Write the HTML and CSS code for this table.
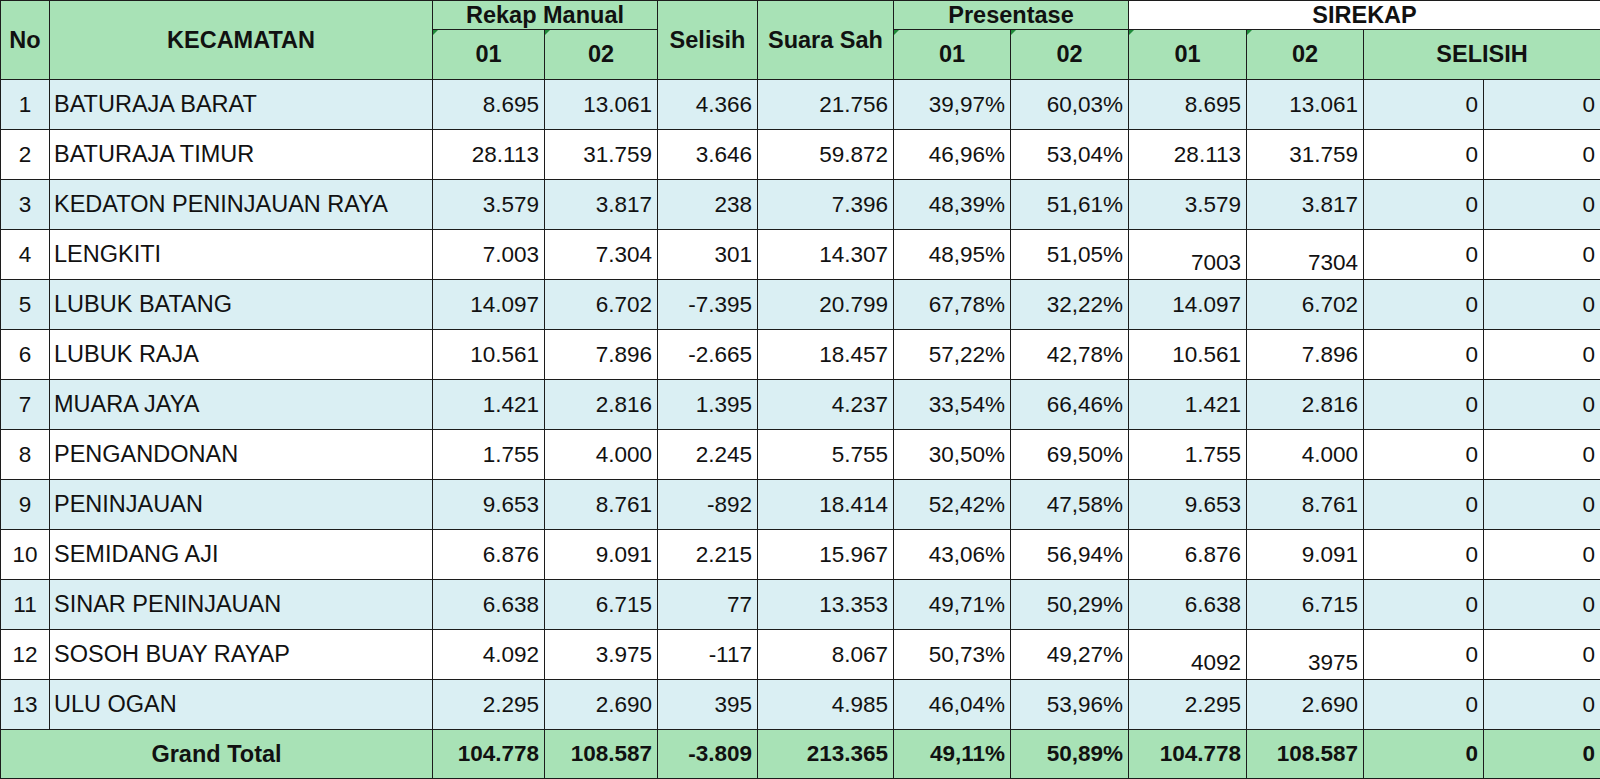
FILE: index.html
```html
<!DOCTYPE html>
<html lang="id">
<head>
<meta charset="utf-8">
<title>Rekap Kecamatan</title>
<link rel="stylesheet" href="styles.css">
</head>
<body>
<table class="sheet">
  <colgroup>
    <col style="width:49px">
    <col style="width:383px">
    <col style="width:112px">
    <col style="width:113px">
    <col style="width:100px">
    <col style="width:136px">
    <col style="width:117px">
    <col style="width:118px">
    <col style="width:118px">
    <col style="width:117px">
    <col style="width:120px">
    <col style="width:117px">
  </colgroup>
  <thead>
    <tr class="h1">
      <th rowspan="2" class="g">No</th>
      <th rowspan="2" class="g">KECAMATAN</th>
      <th colspan="2" class="g">Rekap Manual</th>
      <th rowspan="2" class="g">Selisih</th>
      <th rowspan="2" class="g">Suara Sah</th>
      <th colspan="2" class="g">Presentase</th>
      <th colspan="4" class="w">SIREKAP</th>
    </tr>
    <tr class="h2">
      <th class="g tri">01</th>
      <th class="g tri">02</th>
      <th class="g tri">01</th>
      <th class="g tri">02</th>
      <th class="g tri">01</th>
      <th class="g tri">02</th>
      <th colspan="2" class="g">SELISIH</th>
    </tr>
  </thead>
  <tbody>
    <tr class="b"><td class="no">1</td><td class="name">BATURAJA BARAT</td><td>8.695</td><td>13.061</td><td>4.366</td><td>21.756</td><td>39,97%</td><td>60,03%</td><td>8.695</td><td>13.061</td><td>0</td><td>0</td></tr>
    <tr><td class="no">2</td><td class="name">BATURAJA TIMUR</td><td>28.113</td><td>31.759</td><td>3.646</td><td>59.872</td><td>46,96%</td><td>53,04%</td><td>28.113</td><td>31.759</td><td>0</td><td>0</td></tr>
    <tr class="b"><td class="no">3</td><td class="name">KEDATON PENINJAUAN RAYA</td><td>3.579</td><td>3.817</td><td>238</td><td>7.396</td><td>48,39%</td><td>51,61%</td><td>3.579</td><td>3.817</td><td>0</td><td>0</td></tr>
    <tr><td class="no">4</td><td class="name">LENGKITI</td><td>7.003</td><td>7.304</td><td>301</td><td>14.307</td><td>48,95%</td><td>51,05%</td><td class="raw">7003</td><td class="raw raw2">7304</td><td>0</td><td>0</td></tr>
    <tr class="b"><td class="no">5</td><td class="name">LUBUK BATANG</td><td>14.097</td><td>6.702</td><td>-7.395</td><td>20.799</td><td>67,78%</td><td>32,22%</td><td>14.097</td><td>6.702</td><td>0</td><td>0</td></tr>
    <tr><td class="no">6</td><td class="name">LUBUK RAJA</td><td>10.561</td><td>7.896</td><td>-2.665</td><td>18.457</td><td>57,22%</td><td>42,78%</td><td>10.561</td><td>7.896</td><td>0</td><td>0</td></tr>
    <tr class="b"><td class="no">7</td><td class="name">MUARA JAYA</td><td>1.421</td><td>2.816</td><td>1.395</td><td>4.237</td><td>33,54%</td><td>66,46%</td><td>1.421</td><td>2.816</td><td>0</td><td>0</td></tr>
    <tr><td class="no">8</td><td class="name">PENGANDONAN</td><td>1.755</td><td>4.000</td><td>2.245</td><td>5.755</td><td>30,50%</td><td>69,50%</td><td>1.755</td><td>4.000</td><td>0</td><td>0</td></tr>
    <tr class="b"><td class="no">9</td><td class="name">PENINJAUAN</td><td>9.653</td><td>8.761</td><td>-892</td><td>18.414</td><td>52,42%</td><td>47,58%</td><td>9.653</td><td>8.761</td><td>0</td><td>0</td></tr>
    <tr><td class="no">10</td><td class="name">SEMIDANG AJI</td><td>6.876</td><td>9.091</td><td>2.215</td><td>15.967</td><td>43,06%</td><td>56,94%</td><td>6.876</td><td>9.091</td><td>0</td><td>0</td></tr>
    <tr class="b"><td class="no">11</td><td class="name">SINAR PENINJAUAN</td><td>6.638</td><td>6.715</td><td>77</td><td>13.353</td><td>49,71%</td><td>50,29%</td><td>6.638</td><td>6.715</td><td>0</td><td>0</td></tr>
    <tr><td class="no">12</td><td class="name">SOSOH BUAY RAYAP</td><td>4.092</td><td>3.975</td><td>-117</td><td>8.067</td><td>50,73%</td><td>49,27%</td><td class="raw">4092</td><td class="raw raw2">3975</td><td>0</td><td>0</td></tr>
    <tr class="b"><td class="no">13</td><td class="name">ULU OGAN</td><td>2.295</td><td>2.690</td><td>395</td><td>4.985</td><td>46,04%</td><td>53,96%</td><td>2.295</td><td>2.690</td><td>0</td><td>0</td></tr>
  </tbody>
  <tfoot>
    <tr class="total"><td colspan="2" class="gt">Grand Total</td><td>104.778</td><td>108.587</td><td>-3.809</td><td>213.365</td><td>49,11%</td><td>50,89%</td><td>104.778</td><td>108.587</td><td>0</td><td>0</td></tr>
  </tfoot>
</table>
</body>
</html>
```

FILE: styles.css
```css
html, body {
  margin: 0;
  padding: 0;
  background: #ffffff;
}

.sheet {
  width: 1600px;
  table-layout: fixed;
  border-collapse: collapse;
  font-family: "Liberation Sans", Arial, sans-serif;
  color: #111111;
}

.sheet th,
.sheet td {
  border: 1px solid #1c1c1c;
  padding: 0;
  overflow: hidden;
  white-space: nowrap;
}

.sheet th {
  font-weight: bold;
  font-size: 23.5px;
  text-align: center;
  vertical-align: middle;
}

.h1 th {
  height: 28px;
  line-height: 26px;
}

.h2 th {
  height: 49px;
}

.g {
  background: #a8e2b6;
}

.w {
  background: #ffffff;
}

.tri {
  position: relative;
}

.tri::before {
  content: "";
  position: absolute;
  left: 0;
  top: 0;
  border-top: 5px solid #1f8a3a;
  border-right: 5px solid transparent;
}

.sheet td {
  height: 49px;
  font-size: 22.5px;
  text-align: right;
  vertical-align: middle;
  padding-right: 5px;
  background: #ffffff;
}

.sheet tr.b td {
  background: #daeff3;
}

.sheet td.no {
  text-align: center;
  padding-right: 0;
}

.sheet td.name {
  text-align: left;
  padding-left: 4px;
  padding-right: 0;
  font-size: 23.5px;
}

.sheet td.raw {
  height: 46px;
  vertical-align: bottom;
  padding-bottom: 3px;
  border-top-color: #c8c8c8;
}

.sheet td.raw2 {
  border-left-color: #dddddd;
}

.total td {
  height: 48px;
  font-weight: bold;
  background: #a8e2b6;
}

.sheet .total td.gt {
  text-align: center;
  padding-right: 0;
  font-size: 23.5px;
}
```
